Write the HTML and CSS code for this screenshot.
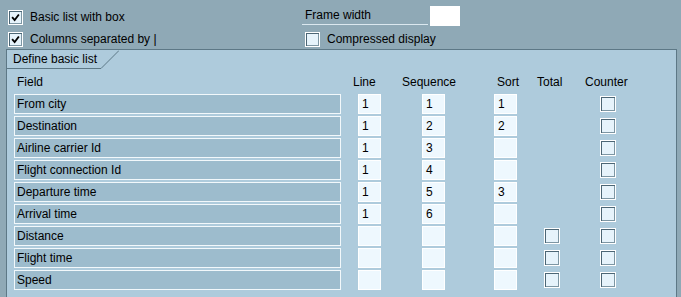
FILE: index.html
```html
<!DOCTYPE html>
<html>
<head>
  <meta charset="utf-8">
  <title>Define basic list</title>
  <link rel="stylesheet" href="styles.css">
</head>
<body>
  <div class="options">
    <div class="opt-col">
      <label class="opt"><span class="chk checked"><svg viewBox="0 0 13 13"><polyline points="2.5,6 5.5,9.5 10.5,3"/></svg></span>Basic list with box</label>
      <label class="opt"><span class="chk checked"><svg viewBox="0 0 13 13"><polyline points="2.5,6 5.5,9.5 10.5,3"/></svg></span>Columns separated by |</label>
    </div>
    <div class="opt-col">
      <div class="frame">
        <span class="frame-label">Frame width</span>
        <span class="frame-input"></span>
      </div>
      <label class="opt"><span class="chk"></span>Compressed display</label>
    </div>
  </div>

  <div class="panel">
    <div class="tab">
      <span class="tab-text">Define basic list</span>
      <svg class="tab-edge" width="18" height="19" viewBox="0 0 18 19"><line x1="0" y1="18.5" x2="18" y2="0.5"/></svg>
    </div>

    <div class="head">
      <span class="h-field">Field</span>
      <span>Line</span>
      <span>Sequence</span>
      <span>Sort</span>
      <span>Total</span>
      <span>Counter</span>
    </div>

    <div class="rows">
      <div class="row">
        <span class="field">From city</span>
        <span class="inp">1</span><span class="inp">1</span><span class="inp">1</span>
        <span></span><span class="chk"></span>
      </div>
      <div class="row">
        <span class="field">Destination</span>
        <span class="inp">1</span><span class="inp">2</span><span class="inp">2</span>
        <span></span><span class="chk"></span>
      </div>
      <div class="row">
        <span class="field">Airline carrier Id</span>
        <span class="inp">1</span><span class="inp">3</span><span class="inp"></span>
        <span></span><span class="chk"></span>
      </div>
      <div class="row">
        <span class="field">Flight connection Id</span>
        <span class="inp">1</span><span class="inp">4</span><span class="inp"></span>
        <span></span><span class="chk"></span>
      </div>
      <div class="row">
        <span class="field">Departure time</span>
        <span class="inp">1</span><span class="inp">5</span><span class="inp">3</span>
        <span></span><span class="chk"></span>
      </div>
      <div class="row">
        <span class="field">Arrival time</span>
        <span class="inp">1</span><span class="inp">6</span><span class="inp"></span>
        <span></span><span class="chk"></span>
      </div>
      <div class="row">
        <span class="field">Distance</span>
        <span class="inp"></span><span class="inp"></span><span class="inp"></span>
        <span class="chk"></span><span class="chk"></span>
      </div>
      <div class="row">
        <span class="field">Flight time</span>
        <span class="inp"></span><span class="inp"></span><span class="inp"></span>
        <span class="chk"></span><span class="chk"></span>
      </div>
      <div class="row">
        <span class="field">Speed</span>
        <span class="inp"></span><span class="inp"></span><span class="inp"></span>
        <span class="chk"></span><span class="chk"></span>
      </div>
    </div>
  </div>
</body>
</html>
```

FILE: styles.css
```css
html {
  font-family: "Liberation Sans", Arial, sans-serif;
  font-size: 12px;
  color: #000;
}
body {
  margin: 0;
  height: 297px;
  background-color: #8fa9b6;
  display: flex;
  flex-direction: column;
  overflow: hidden;
}

/* top options */
.options {
  display: grid;
  grid-template-columns: 294px auto;
  padding: 6px 0 0 8px;
  height: 43px;
}
.opt-col {
  display: flex;
  flex-direction: column;
}
.opt {
  display: flex;
  align-items: center;
  height: 22px;
  gap: 7px;
}
.chk {
  box-sizing: border-box;
  width: 15px;
  height: 15px;
  border: 1px solid #fff;
  background-color: #e6f3fb;
  box-shadow: inset 1px 1px 0 #4c6675, inset -1px -1px 0 #7d96a3;
  display: flex;
  align-items: center;
  justify-content: center;
}
.chk svg {
  width: 11px;
  height: 11px;
  fill: none;
  stroke: #000;
  stroke-width: 2.2;
}
.frame {
  display: flex;
  align-items: flex-start;
  height: 22px;
}
.frame-label {
  width: 123px;
  height: 17px;
  padding: 1px 0 0 3px;
  border-bottom: 1px solid #dbe8ef;
  line-height: 16px;
}
.frame-input {
  width: 30px;
  height: 20px;
  margin-left: 2px;
  background-color: #fff;
}
.frame + .opt {
  margin-left: 3px;
}

/* panel */
.panel {
  flex: 1;
  margin-left: 6px;
  width: 669px;
  background-color: #aecbdc;
  border: 1px solid #5d7886;
  border-bottom: none;
}
.tab {
  display: flex;
  height: 19px;
}
.tab-text {
  width: 88px;
  padding-left: 6px;
  line-height: 18px;
  border-bottom: 1px solid #5d7886;
}
.tab-edge line {
  stroke: #5d7886;
  stroke-width: 1;
}

.head {
  display: grid;
  grid-template-columns: 346px 49px 95px 40px 48px auto;
  height: 25px;
  align-items: center;
}
.h-field {
  padding-left: 10px;
}

.rows {
  display: flex;
  flex-direction: column;
  gap: 2px;
  padding-left: 7px;
}
.row {
  display: grid;
  grid-template-columns: 344px 64px 72px 50px 56px 16px;
  height: 20px;
  align-items: center;
}
.field {
  box-sizing: border-box;
  width: 327px;
  height: 20px;
  border: 1px solid #f2f8fb;
  background-color: #9dbccd;
  padding-left: 2px;
  line-height: 18px;
}
.inp {
  box-sizing: border-box;
  width: 23px;
  height: 20px;
  border: 1px solid #fff;
  background-color: #eef8fe;
  padding-left: 3px;
  line-height: 18px;
}
.row .chk {
  width: 16px;
  height: 16px;
}
```
